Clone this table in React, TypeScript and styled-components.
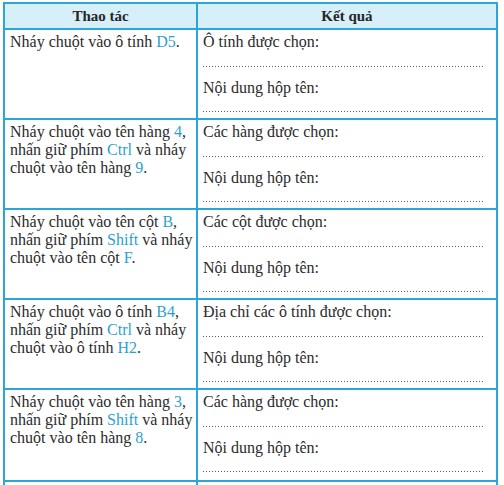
import React from "react";
import styled, { createGlobalStyle } from "styled-components";

const Global = createGlobalStyle`
  html, body { margin: 0; padding: 0; background: #ffffff; overflow: hidden; }
  body { font-family: "Liberation Serif", "Times New Roman", serif; color: #2b2b2b; }
`;

const Table = styled.div`
  margin: 2px 0 0 3px;
  width: 495px;
  box-sizing: border-box;
  border-left: 2px solid #2ba6d6;
  border-right: 2px solid #2ba6d6;
  border-top: 2px solid #2ba6d6;
`;

const Row = styled.div<{ $h: number; $head?: boolean }>`
  display: grid;
  grid-template-columns: 191px 1fr;
  height: ${(p) => p.$h}px;
  box-sizing: border-box;
  border-top: ${(p) => (p.$head ? "0" : "2px solid #2ba6d6")};
  background: ${(p) => (p.$head ? "#d6eff9" : "#ffffff")};
`;

const HeadCell = styled.div<{ $right?: boolean }>`
  display: flex;
  align-items: center;
  justify-content: center;
  font-weight: bold;
  font-size: 15px;
  color: #262626;
  border-left: ${(p) => (p.$right ? "2px solid #2ba6d6" : "0")};
`;

const LeftCell = styled.div`
  padding: 3px 0 0 5px;
  font-size: 16px;
  line-height: 18px;
  white-space: nowrap;
`;

const RightCell = styled.div`
  border-left: 2px solid #2ba6d6;
  padding: 1px 12px 0 5px;
  display: flex;
  flex-direction: column;
`;

const Label = styled.div`
  font-size: 16px;
  line-height: 22px;
  height: 22px;
`;

const Dots = styled.div<{ $gap: number }>`
  height: ${(p) => p.$gap}px;
  margin-bottom: 10px;
  background-image: linear-gradient(to right, #5a5a5a 1px, transparent 1px);
  background-size: 3px 1px;
  background-repeat: repeat-x;
  background-position: left bottom;
`;

const Key = styled.span`
  color: #2e9fcf;
`;

type Item = { text: React.ReactNode; label: string; h: number };

const items: Item[] = [
  {
    text: <>Nháy chuột vào ô tính <Key>D5</Key>.</>,
    label: "Ô tính được chọn:",
    h: 90,
  },
  {
    text: (
      <>
        Nháy chuột vào tên hàng <Key>4</Key>,<br />
        nhấn giữ phím <Key>Ctrl</Key> và nháy<br />
        chuột vào tên hàng <Key>9</Key>.
      </>
    ),
    label: "Các hàng được chọn:",
    h: 90,
  },
  {
    text: (
      <>
        Nháy chuột vào tên cột <Key>B</Key>,<br />
        nhấn giữ phím <Key>Shift</Key> và nháy<br />
        chuột vào tên cột <Key>F</Key>.
      </>
    ),
    label: "Các cột được chọn:",
    h: 90,
  },
  {
    text: (
      <>
        Nháy chuột vào ô tính <Key>B4</Key>,<br />
        nhấn giữ phím <Key>Ctrl</Key> và nháy<br />
        chuột vào ô tính <Key>H2</Key>.
      </>
    ),
    label: "Địa chỉ các ô tính được chọn:",
    h: 90,
  },
  {
    text: (
      <>
        Nháy chuột vào tên hàng <Key>3</Key>,<br />
        nhấn giữ phím <Key>Shift</Key> và nháy<br />
        chuột vào tên hàng <Key>8</Key>.
      </>
    ),
    label: "Các hàng được chọn:",
    h: 92,
  },
];

export default function App() {
  return (
    <>
      <Global />
      <Table>
        <Row $h={24} $head>
          <HeadCell>Thao tác</HeadCell>
          <HeadCell $right>Kết quả</HeadCell>
        </Row>
        {items.map((it, i) => (
          <Row key={i} $h={it.h}>
            <LeftCell>{it.text}</LeftCell>
            <RightCell>
              <Label>{it.label}</Label>
              <Dots $gap={14} />
              <Label>Nội dung hộp tên:</Label>
              <Dots $gap={13} />
            </RightCell>
          </Row>
        ))}
        <Row $h={30}>
          <LeftCell />
          <RightCell />
        </Row>
      </Table>
    </>
  );
}
